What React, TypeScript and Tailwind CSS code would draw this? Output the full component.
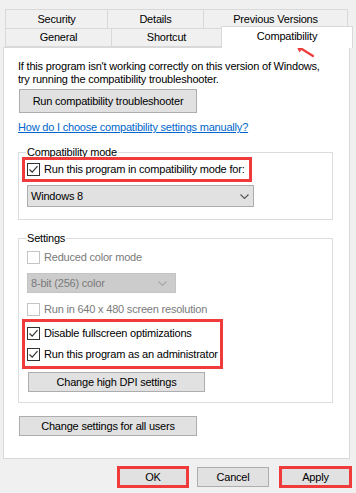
import * as React from "react"
import { clsx } from "clsx"

function CheckBox({ checked, disabled }: { checked?: boolean; disabled?: boolean }) {
  return (
    <span
      className={clsx(
        "flex size-[13px] shrink-0 items-center justify-center border bg-white",
        disabled ? "border-[#c4c4c4]" : "border-[#333333]"
      )}
    >
      {checked && (
        <svg viewBox="0 0 11 11" className="size-[11px]">
          <path d="M1.5 5.5 L4.2 8.2 L9.5 2.2" fill="none" stroke="#333333" strokeWidth="1.2" />
        </svg>
      )}
    </span>
  )
}

function CheckRow({ label, checked, disabled }: { label: string; checked?: boolean; disabled?: boolean }) {
  return (
    <div className="flex h-[13px] items-center gap-[4px] whitespace-nowrap">
      <CheckBox checked={checked} disabled={disabled} />
      <span className={clsx("leading-[13px]", disabled ? "text-[#7a7a7a]" : "text-black")}>{label}</span>
    </div>
  )
}

function Chevron({ color }: { color: string }) {
  return (
    <svg viewBox="0 0 9 5" className="h-[5px] w-[9px]">
      <path d="M0.5 0.5 L4.5 4.5 L8.5 0.5" fill="none" stroke={color} strokeWidth="1.1" />
    </svg>
  )
}

function Button({ label, className }: { label: string; className?: string }) {
  return (
    <div
      className={clsx(
        "flex items-center justify-center whitespace-nowrap border border-[#adadad] bg-[#e1e1e1] text-black",
        className
      )}
    >
      {label}
    </div>
  )
}

export default function App() {
  const tab = "flex items-center justify-center border border-[#d9d9d9] bg-[#f0f0f0] text-black"

  return (
    <div
      className="relative h-[493px] w-[356px] overflow-hidden bg-[#f0f0f0] text-[11px] leading-[13px] tracking-[-0.2px] text-black"
      style={{ fontFamily: '"Liberation Sans", Arial, sans-serif' }}
    >
      {/* Tabs */}
      <div className="pt-[9px]">
        <div className="ml-[5px] flex h-[20px]">
          <div className={clsx(tab, "w-[103px]")}>Security</div>
          <div className={clsx(tab, "-ml-px w-[97px]")}>Details</div>
          <div className={clsx(tab, "-ml-px w-[145px]")}>Previous Versions</div>
        </div>
        <div className="-mt-px ml-[5px] flex h-[19px] items-start">
          <div className={clsx(tab, "h-[19px] w-[107px]")}>General</div>
          <div className={clsx(tab, "-ml-px h-[19px] w-[111px]")}>Shortcut</div>
          <div className="relative z-10 -ml-px -mt-[2px] flex h-[22px] w-[132px] items-start justify-center border border-b-0 border-[#d9d9d9] bg-white pt-[3px]">
            Compatibility
          </div>
        </div>
      </div>

      {/* Panel */}
      <div className="ml-[3px] flex h-[412px] w-[347px] flex-col border border-[#d9d9d9] bg-white pl-[14px]">
        <p className="mt-[12px] whitespace-nowrap">
          If this program isn't working correctly on this version of Windows,
          <br />
          try running the compatibility troubleshooter.
        </p>

        <Button label="Run compatibility troubleshooter" className="ml-px mt-[3px] h-[24px] w-[178px]" />

        <span className="mt-[8px] w-fit text-[#0066cc] underline underline-offset-[1px]">
          How do I choose compatibility settings manually?
        </span>

        {/* Compatibility mode */}
        <div className="mt-[18px] flex h-[68px] w-[315px] flex-col border border-[#dcdcdc]">
          <span className="-mt-[7px] ml-[7px] w-fit bg-white px-px">Compatibility mode</span>
          <div className="-mt-[2px] ml-[3px] flex h-[25px] w-[230px] items-center border-[3px] border-[#ef3b3b] pl-[2px]">
            <CheckRow label="Run this program in compatibility mode for:" checked />
          </div>
          <div className="ml-[8px] mt-[3px] flex h-[22px] w-[227px] items-center justify-between border border-[#adadad] bg-[#e1e1e1] pl-[3px] pr-[4px]">
            <span>Windows 8</span>
            <Chevron color="#555555" />
          </div>
        </div>

        {/* Settings */}
        <div className="mt-[18px] flex h-[165px] w-[315px] flex-col border border-[#dcdcdc]">
          <span className="-mt-[7px] ml-[7px] w-fit bg-white px-px">Settings</span>
          <div className="ml-[8px] mt-[6px]">
            <CheckRow label="Reduced color mode" disabled />
          </div>
          <div className="ml-[8px] mt-[9px] flex h-[20px] w-[149px] items-center justify-between border border-[#c4c4c4] bg-[#cccccc] pl-[3px] pr-[8px] text-[#7a7a7a]">
            <span>8-bit (256) color</span>
            <Chevron color="#a8a8a8" />
          </div>
          <div className="ml-[8px] mt-[10px]">
            <CheckRow label="Run in 640 x 480 screen resolution" disabled />
          </div>
          <div className="ml-[3px] mt-[3px] flex h-[50px] w-[201px] flex-col gap-[8px] border-[3px] border-[#ef3b3b] pl-[2px] pt-[5px]">
            <CheckRow label="Disable fullscreen optimizations" checked />
            <CheckRow label="Run this program as an administrator" checked />
          </div>
          <Button label="Change high DPI settings" className="ml-[9px] mt-[3px] h-[20px] w-[177px]" />
        </div>

        <Button label="Change settings for all users" className="ml-px mt-[13px] h-[20px] w-[178px]" />
      </div>

      {/* Dialog buttons */}
      <div className="mt-[7px] flex items-center pl-[117px]">
        <Button label="OK" className="h-[22px] w-[72px] border-[3px] !border-[#ef3b3b]" />
        <Button label="Cancel" className="ml-[8px] h-[20px] w-[72px]" />
        <Button label="Apply" className="ml-[10px] h-[22px] w-[73px] border-[3px] !border-[#ef3b3b]" />
      </div>

      {/* Annotation arrow */}
      <svg className="absolute left-[290px] top-[40px] h-[20px] w-[28px]" viewBox="0 0 28 20">
        <path d="M23 16 L11 8.5" stroke="#ef3b3b" strokeWidth="2.2" strokeLinecap="round" />
        <path d="M5.5 4.5 L14.2 5.6 L9.6 12.4 Z" fill="#ef3b3b" />
      </svg>
    </div>
  )
}
